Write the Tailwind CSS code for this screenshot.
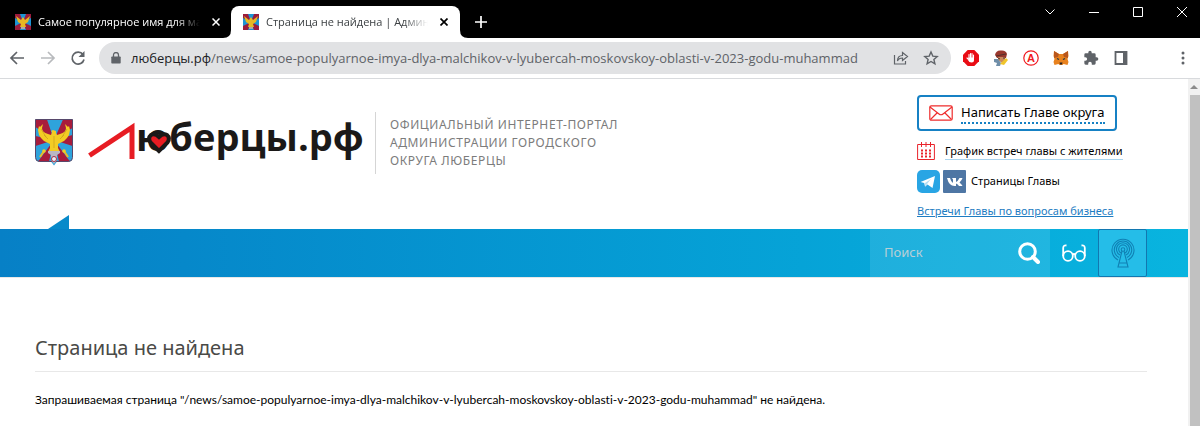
<!DOCTYPE html>
<html lang="ru">
<head>
  <meta charset="UTF-8" />
  <meta name="viewport" content="width=device-width, initial-scale=1" />
  <title>Страница не найдена | Администрация</title>
  <script src="https://cdn.jsdelivr.net/npm/@tailwindcss/browser@4"></script>
</head>
<body class="min-h-screen flex flex-col bg-white text-black font-['Noto_Sans',sans-serif]">

  <!-- Shared drawings -->
  <svg class="hidden" aria-hidden="true">
    <symbol id="arms" viewBox="0 0 38 47">
      <path d="M.5.5h37v38q0 4-4 4H22l-3 4-3-4H4.500q-4 0-4-4z" fill="#2ea3dc" />
      <path d="M19 21L12 .5H.5V8zM19 21L37.500 9V.5H28zM19 21L.5 17v10zM19 21L3 42.500h11zM19 21l16 21.500H24zM19 21l18.500-5v11z" fill="#a81c3c" />
      <path d="M.5.5h37v38q0 4-4 4h-29q-4 0-4-4z" fill="none" stroke="#57486b" />
      <path d="M18 11l3 1v2l1 2 3-1c4-1 6-3 6-6l-1-4 3 3 1-1 1 4-1 5-2 3-3 3-4 2-2 1v4l2 4H13l2-4v-4l-2-1-4-2-3-3-2-3-1-5 1-4 1 1 3-3-1 4c0 3 2 5 6 6l3 1 1-3-1-1z" fill="#f3cc24" />
      <path d="M6 10l5 8M9 16l4 4M32 10l-5 8M29 16l-4 4M19 17v12" stroke="#c99d1c" stroke-width=".7" />
      <path d="M13 32h12v2l-3 2v5l-3 4-3-4v-5l-3-2z" fill="#b9b7c3" />
      <circle cx="19" cy="40" r="2.500" fill="#eee" stroke="#a32d48" />
      <path d="M5 38l4-6M33 38l-4-6" stroke="#e9bd28" stroke-width="2" />
      <circle cx="9" cy="32" r="1.800" fill="#f3cc24" />
      <circle cx="29" cy="32" r="1.800" fill="#f3cc24" />
    </symbol>
    <symbol id="favicon" viewBox="0 0 16 16">
      <path d="M0 0h16v16H0z" fill="#9b1c3c" />
      <path d="M5 0h6L8 8zM5 16h6L8 8zM0 4v8l8-4zM16 4v8L8 8z" fill="#1d95d4" />
      <path d="M1 2l5 4 2-3 2 3 5-4-2 6-3 2 1 3H5l1-3-3-2z" fill="#e8b923" />
      <path d="M6 13h4v2H6z" fill="#aaa" />
    </symbol>
  </svg>

  <!-- Tab strip -->
  <div class="flex items-end h-[38px] bg-black text-[11px] font-['Open_Sans',sans-serif]">
    <div class="flex items-center h-8 w-[231px] pl-[15px] pr-2 text-white">
      <svg class="size-4 shrink-0"><use href="#favicon" /></svg>
      <span class="ml-[7px] w-[162px] whitespace-nowrap mask-r-from-85%">Самое популярное имя для ма</span>
      <button aria-label="Закрыть вкладку" class="ml-2 size-4 flex items-center justify-center">
        <svg class="size-2" viewBox="0 0 8 8" stroke="currentColor" stroke-width="1.500"><path d="M.5.5l7 7M7.500.5l-7 7" /></svg>
      </button>
    </div>
    <div class="relative flex items-center h-8 w-[229px] pl-3 pr-2 bg-white text-[#3c4043] rounded-t-lg">
      <svg class="absolute bottom-0 -left-2 size-2" viewBox="0 0 8 8"><path d="M8 0v8H0q8 0 8-8z" fill="#fff" /></svg>
      <svg class="absolute bottom-0 -right-2 size-2" viewBox="0 0 8 8"><path d="M0 0v8h8Q0 8 0 0z" fill="#fff" /></svg>
      <svg class="size-4 shrink-0"><use href="#favicon" /></svg>
      <span class="ml-[7px] w-[162px] whitespace-nowrap mask-r-from-85%">Страница не найдена | Админи</span>
      <button aria-label="Закрыть вкладку" class="ml-2 size-4 flex items-center justify-center text-black">
        <svg class="size-2" viewBox="0 0 8 8" stroke="currentColor" stroke-width="1.700"><path d="M.5.5l7 7M7.500.5l-7 7" /></svg>
      </button>
    </div>
    <button aria-label="Новая вкладка" class="ml-3 h-8 w-[18px] flex items-center justify-center text-white">
      <svg class="size-3" viewBox="0 0 12 12" stroke="currentColor" stroke-width="1.700"><path d="M6 0v12M0 6h12" /></svg>
    </button>
    <div class="ml-auto flex items-center gap-8 h-full pr-3 pb-[14px] text-white">
      <button aria-label="Поиск вкладок"><svg class="size-3" viewBox="0 0 12 12" fill="none" stroke="currentColor"><path d="M1.500 3.500L6 8l4.500-4.500" /></svg></button>
      <button aria-label="Свернуть"><svg class="size-3" viewBox="0 0 12 12" stroke="currentColor"><path d="M1 6.500h10" /></svg></button>
      <button aria-label="Развернуть"><svg class="size-3" viewBox="0 0 12 12" fill="none" stroke="currentColor"><path d="M1.500 1.500h9v9h-9z" /></svg></button>
      <button aria-label="Закрыть"><svg class="size-3" viewBox="0 0 12 12" stroke="currentColor"><path d="M1 1l10 10M11 1L1 11" /></svg></button>
    </div>
  </div>

  <!-- Toolbar -->
  <div class="flex items-center h-[41px] px-[9px] border-b border-[#d8dadd] text-[#5f6368]">
    <button aria-label="Назад"><svg class="size-4" viewBox="0 0 16 16" fill="none" stroke="currentColor" stroke-width="1.700"><path d="M15 8H2.500M8 2L2 8l6 6" /></svg></button>
    <button aria-label="Вперёд" class="ml-[15px] text-[#b8babd]"><svg class="size-4" viewBox="0 0 16 16" fill="none" stroke="currentColor" stroke-width="1.700"><path d="M1 8h12.500M8 2l6 6-6 6" /></svg></button>
    <button aria-label="Обновить" class="ml-[14px]"><svg class="size-4" viewBox="0 0 16 16"><path d="M13 4.500A6 6 0 1 0 14 9.500" fill="none" stroke="currentColor" stroke-width="1.700" /><path d="M14.500 1v6h-6z" fill="currentColor" /></svg></button>
    <div class="ml-[13px] flex-1 min-w-0 flex items-center h-8 rounded-full bg-[#e1e2e4] pl-3 pr-3">
      <svg class="w-[10px] h-3 shrink-0" viewBox="0 0 10 12"><path d="M1 4.500h8q.7 0 .7.7v5.600q0 .7-.7.7H1q-.7 0-.7-.7V5.200q0-.7.7-.7z" fill="currentColor" /><path d="M2.500 5V3a2.500 2.500 0 0 1 5 0v2" fill="none" stroke="currentColor" stroke-width="1.300" /></svg>
      <div contenteditable="true" role="textbox" aria-label="Адресная строка" class="ml-[10px] flex-1 min-w-0 overflow-hidden whitespace-nowrap text-[13px] leading-5 outline-none font-['Open_Sans',sans-serif]"><span class="text-[#202124]">люберцы.рф</span>/news/samoe-populyarnoe-imya-dlya-malchikov-v-lyubercah-moskovskoy-oblasti-v-2023-godu-muhammad</div>
      <button aria-label="Поделиться"><svg class="size-4" viewBox="0 0 16 16" fill="none" stroke="currentColor" stroke-width="1.200"><path d="M1.500 5v9h11v-3M4.500 11c0-4 2-5.500 5-5.500V2.500l5 4-5 4V8c-2.500 0-4 .5-5 3z" /></svg></button>
      <button aria-label="Добавить в закладки" class="ml-[14px]"><svg class="size-4" viewBox="0 0 16 16" fill="none" stroke="currentColor" stroke-width="1.400"><path d="M8 2l1.800 4.100 4.400.4-3.300 2.900 1 4.400L8 11.500l-3.900 2.300 1-4.400-3.300-2.900 4.400-.4z" /></svg></button>
    </div>
    <div class="ml-3 flex items-center gap-[14px]">
      <button aria-label="Adblock"><svg class="size-4" viewBox="0 0 16 16"><path d="M4.700 0h6.600L16 4.700v6.600L11.300 16H4.700L0 11.300V4.700z" fill="#e90c14" /><path d="M5 9l-1-1M6 8V4.500M7.500 8V3.500M9 8V3.500M10.500 8V5" stroke="#fff" stroke-width="1.100" stroke-linecap="round" /><path d="M5.500 7.500h5.500V10q0 2.500-2.500 2.500T5 10z" fill="#fff" /></svg></button>
      <button aria-label="Расширение"><svg class="size-4" viewBox="0 0 16 16"><path d="M2 5q1-5 6-4.500Q13 0 14 4l-1 4H4z" fill="#99382d" /><path d="M5 7h7v3l-3 3-4-3z" fill="#c98a5c" /><path d="M1 9l4 0 3 4-1 3H3l1-3-3-1z" fill="#6f8ea8" /><path d="M7 14l6-6 2 2-4 5z" fill="#f0c52b" /><path d="M3 6l10-2M5 8l2 1M10 8h2" stroke="#52302a" /></svg></button>
      <button aria-label="Расширение A"><svg class="size-4" viewBox="0 0 16 16"><circle cx="8" cy="8" r="7.200" fill="#fff" stroke="#f01a20" stroke-width="1.200" /><text x="8" y="12" text-anchor="middle" font-family="Liberation Sans, sans-serif" font-size="11" font-weight="700" fill="#f01a20">A</text></svg></button>
      <button aria-label="MetaMask"><svg class="size-4" viewBox="0 0 16 16"><path d="M1 1l5 3h4l5-3 .5 5-1 3 1 3-1 3-4-1-1 1H6.500l-1-1-4 1-1-3 1-3-1-3z" fill="#e8821e" /><path d="M1 1l5 3-1 3-4 1zM15 1l-5 3 1 3 4 1z" fill="#b9561c" /><path d="M4 8.500l2 1M12 8.500l-2 1" stroke="#233447" stroke-width="1.300" /><path d="M6.500 12.500h3l-.5 2H7z" fill="#2b2420" /></svg></button>
      <button aria-label="Расширения"><svg class="size-4" viewBox="0 0 24 24" fill="currentColor"><path d="M20.500 11H19V7a2 2 0 0 0-2-2h-4V3.500a2.500 2.500 0 0 0-5 0V5H4a2 2 0 0 0-2 2v3.800h1.500a2.700 2.700 0 0 1 0 5.400H2V20a2 2 0 0 0 2 2h3.800v-1.500a2.700 2.700 0 0 1 5.400 0V22H17a2 2 0 0 0 2-2v-4h1.500a2.500 2.500 0 0 0 0-5z" /></svg></button>
      <button aria-label="Боковая панель"><svg class="size-4" viewBox="0 0 16 16"><path d="M2.500 2h11v12h-11z" fill="none" stroke="currentColor" stroke-width="1.800" /><path d="M10 2h4v12h-4z" fill="currentColor" /></svg></button>
    </div>
    <button aria-label="Меню" class="ml-[46px]"><svg class="size-4" viewBox="0 0 16 16" fill="currentColor"><circle cx="8" cy="3" r="1.500" /><circle cx="8" cy="8" r="1.500" /><circle cx="8" cy="13" r="1.500" /></svg></button>
  </div>

  <!-- Page -->
  <div class="flex-1 flex">
    <div class="flex-1 min-w-0">
      <header class="relative flex items-start h-[150px] pl-[35px] pr-[41px]">
        <a href="#" aria-label="Люберцы.рф" class="flex items-start pt-10">
          <svg class="w-[38px] h-[47px]"><use href="#arms" /></svg>
          <svg class="ml-[14px] w-[276px] h-[47px] overflow-visible" viewBox="0 0 276 47">
            <path d="M2.500 36.500L45 8.500V40" fill="none" stroke="#e71c23" stroke-width="5" stroke-miterlimit="10" />
            <text x="49" y="32" font-family="Open Sans, sans-serif" font-size="38" font-weight="700" fill="#1b1918">юберцы.рф</text>
            <path d="M72 32L63.500 23.500q-3-4.500.5-7.500 4-2 8 2 4-4 8-2 3.500 3 .5 7.500z" fill="#e71c23" stroke="#1b1918" stroke-width="4" />
          </svg>
        </a>
        <div class="mt-[33px] ml-3 h-[62px] border-l border-[#d5d5d5] pl-[14px] pt-1 w-[270px] text-xs leading-[18px] tracking-wider uppercase text-[#7c7c7c]">
          Официальный интернет-портал<br>администрации городского<br>округа Люберцы
        </div>
        <div class="ml-auto w-[230px] pt-4 flex flex-col items-start text-[11px]">
          <a href="#" class="flex items-center gap-2 h-9 px-[10px] border-2 border-[#1681c4] rounded text-[13px] whitespace-nowrap">
            <svg class="w-6 h-4" viewBox="0 0 24 16" fill="none" stroke="#ee2c2c" stroke-width="1.200"><rect x=".8" y=".8" width="22.400" height="14.400" rx="1.500" /><path d="M1 2l9 7q2 1.500 4 0l9-7M1.500 14.500L8 8M22.500 14.500L16 8" /></svg>
            <span class="border-b-2 border-dotted border-[#1681c4] leading-5">Написать Главе округа</span>
          </a>
          <a href="#" class="mt-[10px] flex items-center gap-[10px] h-5 whitespace-nowrap">
            <svg class="w-[18px] h-[18px]" viewBox="0 0 18 18" fill="none" stroke="#e9242c"><path d="M.6 2.500h16.800v15H.6zM4.500 0v5M9 0v5M13.500 0v5" /><path d="M4 8.500h11M4 11.500h11M4 14.500h11" stroke-width="2" stroke-dasharray="2 2" /></svg>
            <span class="border-b border-[#a9d4ee] leading-4">График встреч главы с жителями</span>
          </a>
          <div class="mt-2 flex items-center gap-[3px] h-6">
            <a href="#" aria-label="Telegram"><svg class="w-[23px] h-[23px]" viewBox="0 0 23 23"><rect width="23" height="23" rx="5" fill="#29a5e4" /><path d="M3.500 12L18 6l-2.500 12-5-3.500-2.500 2-.8-3.500z" fill="#fff" /><path d="M8 13l6-4-4 5-1.500 3z" fill="#b5dcf2" /></svg></a>
            <a href="#" aria-label="ВКонтакте"><svg class="w-[23px] h-[23px]" viewBox="0 0 23 23"><rect width="23" height="23" rx="1" fill="#4e76a4" /><path d="M4 8h3q1 4 3 5V9.500L9 8h4v4q2-1 3.500-4h3q-.5 2-3 4.500 2.500 2 3 3.500h-3.500q-1-2-3-2.500V16h-1.500Q6 16 4 8z" fill="#fff" /></svg></a>
            <span class="ml-[2px]">Страницы Главы</span>
          </div>
          <a href="#" class="mt-2 leading-5 text-[#1d7cc2] underline whitespace-nowrap">Встречи Главы по вопросам бизнеса</a>
        </div>
        <svg class="absolute bottom-0 left-12 w-[21px] h-[14px]" viewBox="0 0 21 14"><path d="M0 14L21 0v14z" fill="#078aca" /></svg>
      </header>

      <nav class="flex justify-end h-12 pr-[41px] bg-linear-to-r from-[#0780c6] to-[#09b4df]">
        <form class="flex items-center w-[180px] bg-white/10 pr-[10px] pl-[14px]">
          <input type="search" aria-label="Поиск" placeholder="Поиск" class="flex-1 min-w-0 text-[13px] text-white placeholder:text-[#b9cfd6] outline-none" />
          <button type="submit" aria-label="Найти"><svg class="size-[22px]" viewBox="0 0 22 22" fill="none" stroke="#fff"><circle cx="9.500" cy="9.500" r="7.800" stroke-width="3" /><path d="M15 15l5 5" stroke-width="4" stroke-linecap="round" /></svg></button>
        </form>
        <button aria-label="Версия для слабовидящих" class="w-12 flex items-center justify-center">
          <svg class="w-6 h-[18px]" viewBox="0 0 24 18" fill="none" stroke="#fff" stroke-width="1.800"><circle cx="6" cy="12" r="4.800" /><circle cx="18" cy="12" r="4.800" /><path d="M10.500 10.500q1.500-1 3 0M1.200 12V4q0-3 3.300-2.500M22.800 12V4q0-3-3.300-2.500" /></svg>
        </button>
        <button aria-label="Трансляция" class="w-[49px] flex items-center justify-center bg-[#25bde8] border border-[#1277b0] rounded-xs">
          <svg class="w-6 h-[30px]" viewBox="0 0 24 30" fill="none" stroke="#1080b4" stroke-width="1.100"><path d="M7 22a11 11 0 1 1 10 0M8 19.500a8.700 8.700 0 1 1 8 0M9 17a6.500 6.500 0 1 1 6 0M10 15a4.300 4.300 0 1 1 4 0" /><circle cx="12" cy="11.500" r="1.800" /><path d="M11 13L7 29h10L13 13M8 25h8" /></svg>
        </button>
      </nav>

      <main class="border-t border-[#e8e8e8] pl-[35px] pr-[41px] pt-14">
        <h1 class="border-b border-[#e8e8e8] pb-[9px] text-xl leading-7 text-[#4a4a47]">Страница не найдена</h1>
        <p class="mt-[18px] text-xs leading-5 font-['Lato','Noto_Sans',sans-serif] [font-variant-ligatures:none]">Запрашиваемая страница "/news/samoe-populyarnoe-imya-dlya-malchikov-v-lyubercah-moskovskoy-oblasti-v-2023-godu-muhammad" не найдена.</p>
      </main>
    </div>

    <!-- Scrollbar -->
    <div class="w-3 flex flex-col bg-[#f1f1f1]">
      <svg class="w-3 h-4" viewBox="0 0 12 16"><path d="M2 10l4-4 4 4z" fill="#8b8b8b" /></svg>
      <div class="flex-1 ml-[2px] bg-[#c1c1c1]"></div>
    </div>
  </div>
</body>
</html>
